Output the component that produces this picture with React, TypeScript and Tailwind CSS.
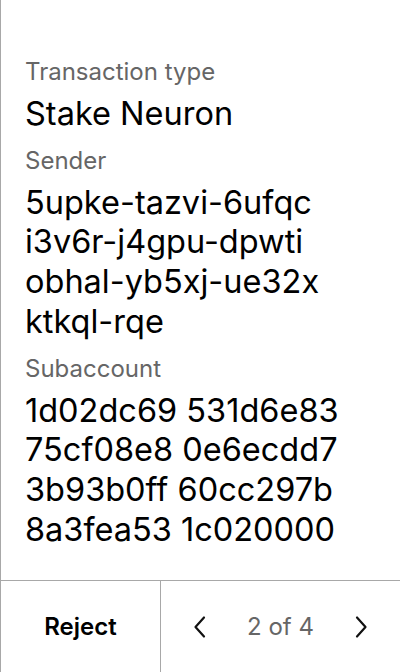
import React from 'react';

const fields = [
  { label: 'Transaction type', lines: ['Stake Neuron'] },
  { label: 'Sender', lines: ['5upke-tazvi-6ufqc', 'i3v6r-j4gpu-dpwti', 'obhal-yb5xj-ue32x', 'ktkql-rqe'] },
  { label: 'Subaccount', lines: ['1d02dc69 531d6e83', '75cf08e8 0e6ecdd7', '3b93b0ff 60cc297b', '8a3fea53 1c020000'] },
];

const Chevron = ({ dir }: { dir: 'left' | 'right' }) => (
  <svg width="24" height="24" viewBox="0 0 24 24" fill="none" stroke="#111" strokeWidth="2.2" strokeLinecap="round" strokeLinejoin="round">
    {dir === 'left' ? <path d="M15 2.5 L6.5 12 L15 21.5" /> : <path d="M9 2.5 L17.5 12 L9 21.5" />}
  </svg>
);

export default function App() {
  return (
    <div
      className="flex h-[672px] w-[400px] flex-col border-l border-[#a8a8a8] bg-white text-black"
      style={{ fontFamily: 'Inter, "Noto Sans", sans-serif' }}
    >
      {/* Details */}
      <div className="flex-1 pl-6 pt-[57px]">
        {fields.map((f, i) => (
          <div key={f.label} className={i > 0 ? 'mt-3' : ''}>
            <div className="text-[24px] leading-[30px] text-[#666]">{f.label}</div>
            <div className="mt-[7px] text-[32.5px] leading-[39.7px]">
              {f.lines.map((l) => (
                <div key={l}>{l}</div>
              ))}
            </div>
          </div>
        ))}
      </div>

      {/* Footer */}
      <div className="flex h-[92px] border-t border-[#a8a8a8]">
        <button className="flex w-[160px] items-center justify-center border-r border-[#a8a8a8] text-[24px] font-semibold">
          Reject
        </button>
        <div className="flex flex-1 items-center justify-between px-7">
          <Chevron dir="left" />
          <span className="text-[24px] text-[#666]">2 of 4</span>
          <Chevron dir="right" />
        </div>
      </div>
    </div>
  );
}
